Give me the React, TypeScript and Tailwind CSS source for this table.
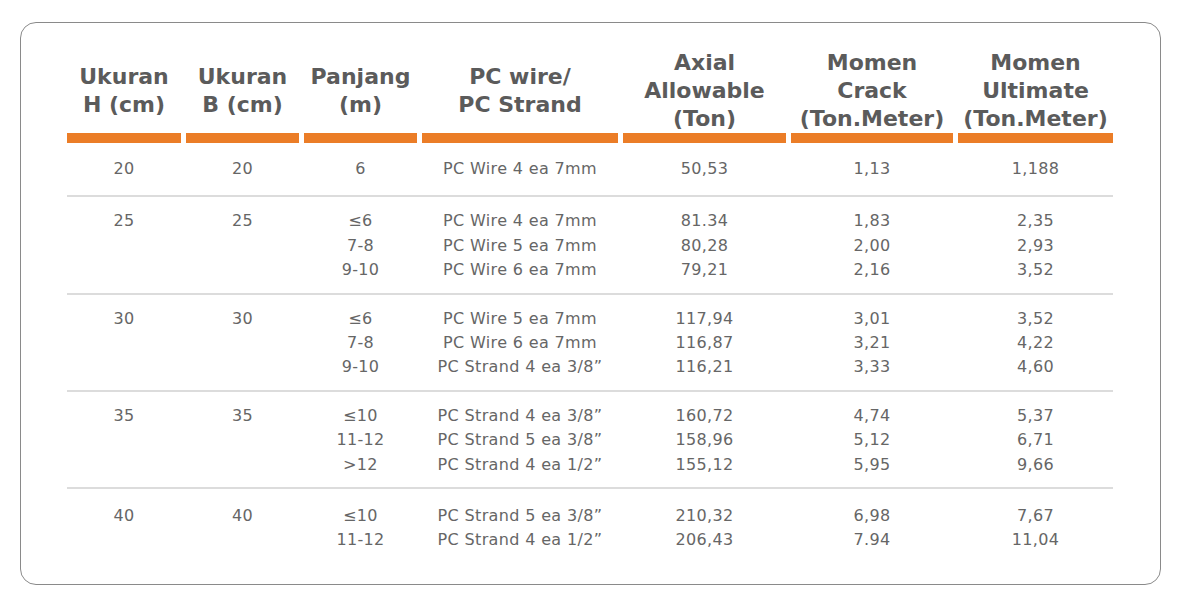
const cols = "grid grid-cols-[114px_113px_113px_196px_163px_162px_155px] gap-x-[5px]";

const headers = [
  ["Ukuran", "H (cm)"],
  ["Ukuran", "B (cm)"],
  ["Panjang", "(m)"],
  ["PC wire/", "PC Strand"],
  ["Axial", "Allowable", "(Ton)"],
  ["Momen", "Crack", "(Ton.Meter)"],
  ["Momen", "Ultimate", "(Ton.Meter)"],
];

type Group = {
  h: string;
  b: string;
  len: string[];
  wire: string[];
  axial: string[];
  crack: string[];
  ult: string[];
};

const groups: Group[] = [
  { h: "20", b: "20", len: ["6"], wire: ["PC Wire 4 ea 7mm"], axial: ["50,53"], crack: ["1,13"], ult: ["1,188"] },
  {
    h: "25",
    b: "25",
    len: ["≤6", "7-8", "9-10"],
    wire: ["PC Wire 4 ea 7mm", "PC Wire 5 ea 7mm", "PC Wire 6 ea 7mm"],
    axial: ["81.34", "80,28", "79,21"],
    crack: ["1,83", "2,00", "2,16"],
    ult: ["2,35", "2,93", "3,52"],
  },
  {
    h: "30",
    b: "30",
    len: ["≤6", "7-8", "9-10"],
    wire: ["PC Wire 5 ea 7mm", "PC Wire 6 ea 7mm", "PC Strand 4 ea 3/8”"],
    axial: ["117,94", "116,87", "116,21"],
    crack: ["3,01", "3,21", "3,33"],
    ult: ["3,52", "4,22", "4,60"],
  },
  {
    h: "35",
    b: "35",
    len: ["≤10", "11-12", ">12"],
    wire: ["PC Strand 4 ea 3/8”", "PC Strand 5 ea 3/8”", "PC Strand 4 ea 1/2”"],
    axial: ["160,72", "158,96", "155,12"],
    crack: ["4,74", "5,12", "5,95"],
    ult: ["5,37", "6,71", "9,66"],
  },
  {
    h: "40",
    b: "40",
    len: ["≤10", "11-12"],
    wire: ["PC Strand 5 ea 3/8”", "PC Strand 4 ea 1/2”"],
    axial: ["210,32", "206,43"],
    crack: ["6,98", "7.94"],
    ult: ["7,67", "11,04"],
  },
];

function Cell({ lines }: { lines: string[] }) {
  return (
    <div className="flex flex-col items-center">
      {lines.map((l, i) => (
        <span key={i} className="whitespace-nowrap">
          {l}
        </span>
      ))}
    </div>
  );
}

export default function App() {
  return (
    <div className="min-h-[601px] w-[1181px] bg-white pl-[20px] pt-[22px] font-['DejaVu_Sans',sans-serif]">
      <div className="h-[563px] w-[1141px] rounded-[16px] border-[1.5px] border-[#8a8a8a] pl-[46px] pt-[26px]">
        {/* header */}
        <div className={cols}>
          {headers.map((h, i) => (
            <div
              key={i}
              className="flex h-[94px] flex-col items-center justify-center border-b-[10px] border-[#eb7d27] text-[22px] font-bold leading-[28px] text-[#5b5b5b]"
            >
              {h.map((l, j) => (
                <span key={j} className="whitespace-nowrap">
                  {l}
                </span>
              ))}
            </div>
          ))}
        </div>

        {/* body */}
        <div className="w-[1046px] text-[16px] leading-[24.4px] tracking-[0.35px] text-[#666666]">
          {groups.map((g, i) => (
            <div
              key={i}
              className={`${cols} ${
                i === 0
                  ? "py-[14px]"
                  : i === groups.length - 1
                    ? "border-t-2 border-[#dcdcdc] pt-[15px]"
                    : "border-t-2 border-[#dcdcdc] pb-[10px] pt-[12px]"
              }`}
            >
              <Cell lines={[g.h]} />
              <Cell lines={[g.b]} />
              <Cell lines={g.len} />
              <Cell lines={g.wire} />
              <Cell lines={g.axial} />
              <Cell lines={g.crack} />
              <Cell lines={g.ult} />
            </div>
          ))}
        </div>
      </div>
    </div>
  );
}
